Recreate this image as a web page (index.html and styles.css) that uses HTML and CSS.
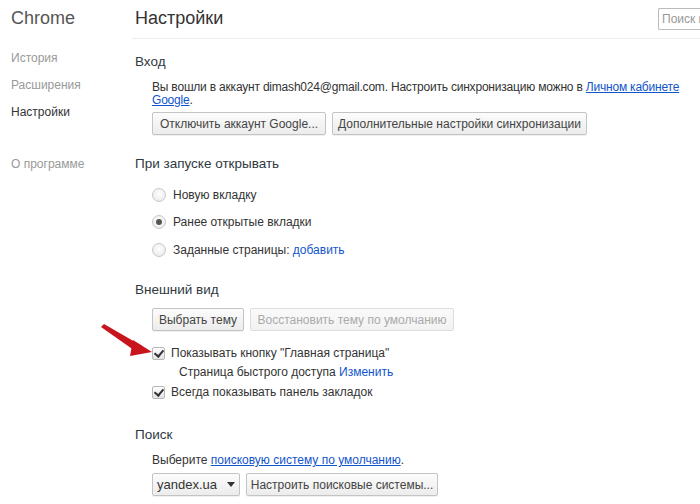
FILE: index.html
```html
<!DOCTYPE html>
<html lang="ru">
<head>
<meta charset="utf-8">
<title>Настройки</title>
<link rel="stylesheet" href="styles.css">
</head>
<body>
<div class="page">
  <nav class="sidebar">
    <div class="brand">Chrome</div>
    <ul class="nav">
      <li class="nav-item">История</li>
      <li class="nav-item">Расширения</li>
      <li class="nav-item active">Настройки</li>
      <li class="nav-item about">О программе</li>
    </ul>
  </nav>
  <main class="main">
    <header class="header">
      <h1 class="title">Настройки</h1>
      <div class="search">Поиск н</div>
    </header>

    <section class="section sec-login">
      <h2 class="sec-title">Вход</h2>
      <div class="sec-body">
        <p class="text nowrap">Вы вошли в аккаунт dimash024@gmail.com. Настроить синхронизацию можно в <a class="link-u">Личном кабинете</a><br><a class="link-u">Google</a>.</p>
        <div class="btn-row">
          <button class="btn btn-disconnect">Отключить аккаунт Google...</button>
          <button class="btn btn-sync">Дополнительные настройки синхронизации</button>
        </div>
      </div>
    </section>

    <section class="section sec-startup">
      <h2 class="sec-title">При запуске открывать</h2>
      <div class="sec-body">
        <div class="opt radio-row r1"><span class="radio"></span><span>Новую вкладку</span></div>
        <div class="opt radio-row r2"><span class="radio checked"></span><span>Ранее открытые вкладки</span></div>
        <div class="opt radio-row r3"><span class="radio"></span><span>Заданные страницы: <a class="link">добавить</a></span></div>
      </div>
    </section>

    <section class="section sec-appearance">
      <h2 class="sec-title">Внешний вид</h2>
      <div class="sec-body">
        <div class="btn-row">
          <button class="btn btn-theme">Выбрать тему</button>
          <button class="btn btn-restore" disabled>Восстановить тему по умолчанию</button>
        </div>
        <div class="opt check-row home"><span class="check"></span><span>Показывать кнопку "Главная страница"</span></div>
        <div class="sub-opt">Страница быстрого доступа <a class="link">Изменить</a></div>
        <div class="opt check-row bookmarks"><span class="check"></span><span>Всегда показывать панель закладок</span></div>
      </div>
    </section>

    <section class="section sec-search">
      <h2 class="sec-title">Поиск</h2>
      <div class="sec-body">
        <p class="text">Выберите <a class="link-u">поисковую систему по умолчанию</a>.</p>
        <div class="btn-row search-row">
          <div class="btn select">yandex.ua<span class="caret"></span></div>
          <button class="btn btn-engines">Настроить поисковые системы...</button>
        </div>
      </div>
    </section>
  </main>
</div>
<svg class="arrow" width="70" height="45" viewBox="0 0 70 45">
  <path d="M3 5 L6 2 L44 24 L40 31 Z" fill="#c8141c"/>
  <path d="M35 18 L54 30 L32 34 Z" fill="#c8141c"/>
</svg>
</body>
</html>
```
FILE: styles.css
```css
* { box-sizing: border-box; }
html, body { margin: 0; padding: 0; }
body {
  width: 700px;
  height: 504px;
  overflow: hidden;
  background: #fff;
  font-family: "Liberation Sans", Arial, sans-serif;
  font-size: 12px;
  color: #333;
  position: relative;
}
.page { display: flex; }
.sidebar { width: 132px; flex: none; padding-left: 11px; }
.brand { font-size: 18px; color: #555; line-height: 20px; margin-top: 8px; }
.nav { list-style: none; margin: 22px 0 0; padding: 0; }
.nav-item { color: #999; line-height: 16px; height: 27px; font-size: 12px; }
.nav-item.active { color: #333; }
.nav-item.about { margin-top: 25px; }

.main { flex: 1; min-width: 0; }
.header {
  display: flex;
  align-items: flex-start;
  height: 39px;
  border-bottom: 1px solid #eee;
  padding-left: 3px;
}
.title { margin: 7px 0 0; font-size: 18px; font-weight: normal; color: #333; line-height: 22px; }
.search {
  margin-left: auto;
  margin-top: 8px;
  width: 42px;
  height: 22px;
  border: 1px solid #bbb;
  border-right: none;
  border-radius: 2px 0 0 2px;
  color: #999;
  white-space: nowrap;
  overflow: hidden;
  padding-left: 3px;
  line-height: 20px;
  font-size: 12px;
}

.section { padding-left: 3px; }
.sec-title { margin: 0; font-size: 13.5px; font-weight: normal; color: #303942; line-height: 18px; }
.sec-body { padding-left: 17px; }
.text { margin: 0; line-height: 13px; }
.nowrap { white-space: nowrap; }
.sec-login { margin-top: 14px; }
.sec-login .text { margin-top: 10px; letter-spacing: -0.2px; }
.link-u { color: #15c; text-decoration: underline; }
.link { color: #15c; }

.btn-row { display: flex; gap: 6px; }
.sec-login .btn-row { margin-top: 5px; }
.btn {
  font-family: inherit;
  font-size: 12px;
  color: #444;
  height: 23px;
  padding: 0;
  border: 1px solid #c4c4c4;
  border-radius: 2px;
  background: linear-gradient(#fcfcfc, #ececec);
  box-shadow: 0 1px 0 rgba(0,0,0,0.06);
  display: flex;
  align-items: center;
  justify-content: center;
  white-space: nowrap;
  margin: 0;
}
.btn-disconnect { width: 174px; }
.btn-sync { width: 255px; }
.btn[disabled] { color: #aaa; border-color: #ddd; background: linear-gradient(#fafafa, #f2f2f2); box-shadow: none; }

.sec-startup { margin-top: 20px; }
.opt { display: flex; align-items: center; gap: 7px; height: 14px; }
.r1 { margin-top: 15px; }
.r2 { margin-top: 13px; }
.r3 { margin-top: 14px; }
.radio {
  width: 14px; height: 14px; border-radius: 50%;
  border: 1px solid #c8c8c8;
  background: radial-gradient(circle at 50% 40%, #fff, #e6e6e6);
  flex: none;
  position: relative;
}
.radio.checked::after {
  content: ""; position: absolute; left: 3px; top: 3px;
  width: 6px; height: 6px; border-radius: 50%; background: #555;
}

.sec-appearance { margin-top: 24px; }
.sec-appearance .btn-row { margin-top: 9px; }
.btn-theme { width: 92px; }
.btn-restore { width: 204px; }
.check-row { gap: 6px; }
.check-row.home { margin-top: 15px; }
.check {
  width: 13px; height: 13px; flex: none;
  border: 1px solid #b8b8b8; border-radius: 2px;
  background: linear-gradient(#fff, #e4e4e4);
  position: relative;
}
.check::after {
  content: ""; position: absolute; left: 3px; top: 0px;
  width: 4px; height: 7px;
  border: solid #333; border-width: 0 2px 2px 0;
  transform: rotate(40deg);
}
.sub-opt { padding-left: 27px; margin-top: 5px; line-height: 14px; }
.check-row.bookmarks { margin-top: 6px; }

.sec-search { margin-top: 27px; }
.sec-search .text { margin-top: 9px; line-height: 14px; }
.search-row { margin-top: 6px; }
.select { width: 88px; color: #333; font-size: 13px; }
.caret {
  margin-left: 10px;
  width: 0; height: 0;
  border-left: 4px solid transparent; border-right: 4px solid transparent;
  border-top: 5px solid #333;
}
.btn-engines { width: 192px; }

.arrow { position: absolute; left: 98px; top: 322px; }
```
